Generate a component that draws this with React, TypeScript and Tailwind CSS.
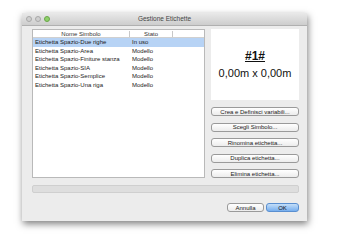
const rows = [
  { name: 'Etichetta Spazio-Due righe', state: 'In uso' },
  { name: 'Etichetta Spazio-Area', state: 'Modello' },
  { name: 'Etichetta Spazio-Finiture stanza', state: 'Modello' },
  { name: 'Etichetta Spazio-SIA', state: 'Modello' },
  { name: 'Etichetta Spazio-Semplice', state: 'Modello' },
  { name: 'Etichetta Spazio-Una riga', state: 'Modello' },
];

const actions = [
  'Crea e Definisci variabili...',
  'Scegli Simbolo...',
  'Rinomina etichetta...',
  'Duplica etichetta...',
  'Elimina etichetta...',
];

function Btn({ label, className = '' }: { label: string; className?: string }) {
  return (
    <div
      className={
        'h-[9px] flex items-center justify-center rounded-[3px] border border-[#9a9a9a] bg-gradient-to-b from-white to-[#ececec] text-[6px] leading-none text-[#1a1a1a] ' +
        className
      }
    >
      {label}
    </div>
  );
}

export default function App() {
  return (
    <div
      className="w-[337px] h-[237px] bg-white pt-[13px] pl-[22px] overflow-hidden"
      style={{ fontFamily: '"Liberation Sans", Arial, sans-serif' }}
    >
      <div className="w-[285px] h-[208px] bg-[#ececec] flex flex-col shadow-[1px_3px_7px_rgba(0,0,0,0.5)]">
        {/* Title bar */}
        <div className="relative h-[13px] flex items-center justify-center bg-gradient-to-b from-[#e9e9e9] to-[#cdcdcd] border-b border-[#b0b0b0]">
          <div className="absolute left-[4px] top-[3px] flex gap-[3px]">
            <span className="w-[6px] h-[6px] rounded-full bg-[#cfcfcf] border border-[#a8a8a8]" />
            <span className="w-[6px] h-[6px] rounded-full bg-[#cfcfcf] border border-[#a8a8a8]" />
            <span className="w-[6px] h-[6px] rounded-full bg-[#8fd16a] border border-[#6aa64a]" />
          </div>
          <span className="text-[6.5px] text-[#444]">Gestione Etichette</span>
        </div>

        <div className="flex pl-[10px] pr-[8px] pt-[3px] gap-[6px]">
          {/* List */}
          <div className="w-[173px] h-[149px] bg-white border border-[#b9b9b9] flex flex-col">
            <div className="h-[8px] flex items-center border-b border-[#d0d0d0] text-[6px] leading-none text-[#333]">
              <div className="w-[97px] text-center border-r border-[#c8c8c8]">Nome Simbolo</div>
              <div className="w-[43px] text-center border-r border-[#c8c8c8]">Stato</div>
            </div>
            {rows.map((r, i) => (
              <div
                key={r.name}
                className={
                  'h-[8.5px] flex items-center text-[6px] leading-none text-[#1a1a1a] ' +
                  (i === 0 ? 'bg-[#b7d3f5]' : '')
                }
              >
                <div className="w-[99px] pl-[2px] whitespace-nowrap">{r.name}</div>
                <div className="whitespace-nowrap">{r.state}</div>
              </div>
            ))}
          </div>

          {/* Right column */}
          <div className="w-[88px] flex flex-col">
            <div className="h-[71px] bg-white flex flex-col items-center justify-center">
              <span className="text-[12px] leading-none font-bold underline text-[#111]">#1#</span>
              <span className="text-[11px] leading-none text-[#111] mt-[6px]">0,00m x 0,00m</span>
            </div>
            <div className="flex flex-col gap-[6.5px] mt-[7px]">
              {actions.map((a) => (
                <Btn key={a} label={a} />
              ))}
            </div>
          </div>
        </div>

        {/* Progress bar */}
        <div className="mx-[10px] mt-[7px] w-[267px] h-[8px] rounded-[2px] bg-[#dedede] border border-[#cfcfcf]" />

        {/* Footer */}
        <div className="flex justify-end gap-[2px] pr-[8px] mt-[10px]">
          <Btn label="Annulla" className="w-[37px]" />
          <div className="w-[33px] h-[9px] flex items-center justify-center rounded-[3px] border border-[#5a8fd0] bg-gradient-to-b from-[#c4def8] to-[#76aeee] text-[6px] leading-none text-[#111]">
            OK
          </div>
        </div>
      </div>
    </div>
  );
}
